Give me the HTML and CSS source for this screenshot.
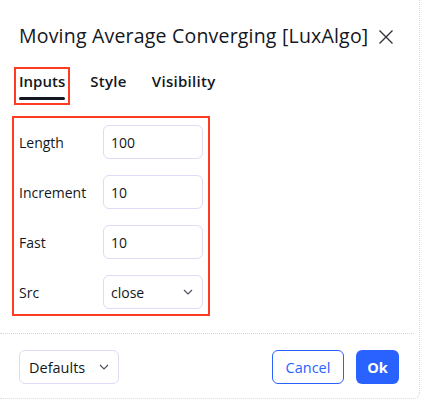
FILE: index.html
```html
<!DOCTYPE html>
<html>
<head>
<meta charset="utf-8">
<link rel="stylesheet" href="styles.css">
</head>
<body>
<div class="dialog">
  <div class="header">
    <div class="title">Moving Average Converging [LuxAlgo]</div>
    <svg class="close" width="16" height="16" viewBox="0 0 16 16"><path d="M1.5 1.5 L14.5 14.5 M14.5 1.5 L1.5 14.5" stroke="#2a2e39" stroke-width="1.3" fill="none"/></svg>
  </div>
  <div class="tabs">
    <div class="tab active">Inputs</div>
    <div class="tab">Style</div>
    <div class="tab">Visibility</div>
  </div>
  <div class="inputs">
    <div class="row"><span class="label">Length</span><div class="field">100</div></div>
    <div class="row"><span class="label">Increment</span><div class="field">10</div></div>
    <div class="row"><span class="label">Fast</span><div class="field">10</div></div>
    <div class="row"><span class="label">Src</span><div class="field select">close<svg class="chev" width="10" height="6" viewBox="0 0 10 6"><path d="M1 1 L5 5 L9 1" stroke="#50535e" stroke-width="1.2" fill="none"/></svg></div></div>
  </div>
  <div class="sep"></div>
  <div class="footer">
    <div class="btn defaults">Defaults<svg class="chev" width="10" height="6" viewBox="0 0 10 6"><path d="M1 1 L5 5 L9 1" stroke="#50535e" stroke-width="1.2" fill="none"/></svg></div>
    <div class="spacer"></div>
    <div class="btn cancel">Cancel</div>
    <div class="btn ok">Ok</div>
  </div>
</div>
</body>
</html>
```

FILE: styles.css
```css
* { box-sizing: border-box; }
html, body { margin: 0; padding: 0; background: #fff; }
body { font-family: "Open Sans", "Noto Sans", sans-serif; color: #131722; }
.dialog {
  width: 420px;
  height: 399px;
  border-right: 1px dotted #d4d4f2;
  border-bottom: 1px dotted #d4d4f2;
  border-bottom-right-radius: 6px;
  background: #fff;
}
.header {
  display: flex;
  align-items: center;
  padding: 24px 0 0 19px;
  height: 48px;
}
.title {
  font-size: 19.5px;
  line-height: 24px;
  letter-spacing: 0.2px;
  color: #131722;
  white-space: nowrap;
}
.close { margin-left: 10px; margin-top: 1px; }
.tabs {
  display: flex;
  gap: 25px;
  padding-left: 19px;
  margin-top: 24px;
}
.tab {
  position: relative;
  height: 28px;
  font-size: 15px;
  font-weight: 600;
  line-height: 18px;
  letter-spacing: 0.3px;
  color: #131722;
}
.tab.active {
  letter-spacing: 0;
  outline: 2px solid #ff3b22;
  outline-offset: 3px;
}
.tab.active::after {
  content: "";
  position: absolute;
  left: 0;
  right: 0;
  bottom: 0;
  height: 3px;
  border-radius: 2px;
  background: #131722;
}
.inputs {
  margin: 16px 0 0 12px;
  width: 198px;
  border: 2px solid #ff3b22;
  padding: 7px 5px 5px 5px;
  display: flex;
  flex-direction: column;
  gap: 16px;
}
.row { display: flex; align-items: center; }
.label { width: 84px; font-size: 14px; color: #131722; }
.field {
  width: 100px;
  height: 34px;
  border: 1px solid #dcdcf6;
  border-radius: 6px;
  padding: 0 7px;
  display: flex;
  align-items: center;
  font-size: 14px;
  color: #131722;
}
.select { justify-content: space-between; padding-right: 9px; }
.sep {
  margin-top: 17px;
  border-top: 1px dotted #d4d4f2;
  margin-right: 5px;
}
.footer {
  display: flex;
  align-items: center;
  gap: 12px;
  padding: 16px 20px 0 19px;
}
.spacer { flex: 1; }
.btn {
  height: 34px;
  border-radius: 6px;
  display: flex;
  align-items: center;
  font-size: 14.5px;
}
.defaults {
  width: 100px;
  border: 1px solid #dcdcf6;
  padding: 0 9px 0 9px;
  justify-content: space-between;
  color: #131722;
}
.cancel {
  width: 72px;
  border: 1px solid #2962ff;
  color: #2962ff;
  justify-content: center;
}
.ok {
  width: 43px;
  background: #2962ff;
  color: #fff;
  font-weight: 700;
  justify-content: center;
}
```
